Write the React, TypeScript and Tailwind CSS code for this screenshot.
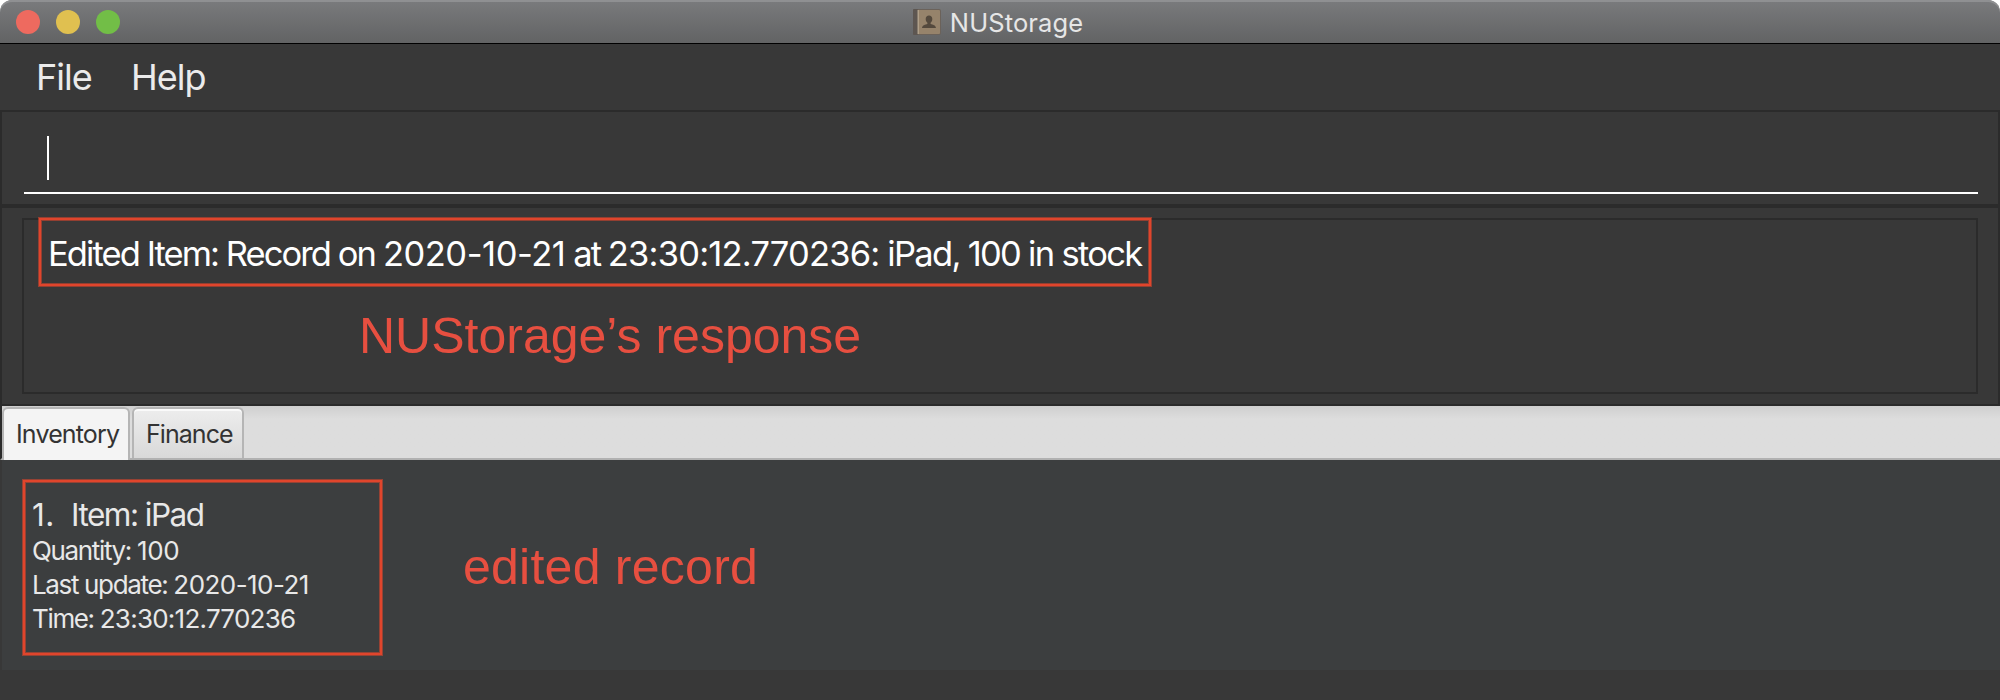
function BookIcon() {
  return (
    <svg width="28" height="26" viewBox="0 0 28 26" className="block shrink-0">
      <rect x="0" y="0" width="28" height="26" rx="2" fill="#6b625a" />
      <rect x="0" y="0" width="5" height="26" rx="1" fill="#5d5651" />
      <rect x="5" y="1" width="22" height="24" rx="1" fill="#96836b" />
      <rect x="4.5" y="1" width="1.5" height="24" fill="#b0a08a" />
      <path
        d="M16 6.5c2 0 3.300 1.400 3.300 3.500 0 1.600-.7 3-1.700 3.800v1.300c2.200.5 5 1.200 5.400 3.900H9c.4-2.700 3.200-3.400 5.400-3.900v-1.300c-1-.8-1.700-2.200-1.700-3.800 0-2.100 1.300-3.500 3.300-3.500z"
        fill="#54493d"
      />
    </svg>
  );
}

function TitleBar() {
  return (
    <header className="relative flex h-11 items-center justify-center rounded-t-[12px] border-b border-black bg-linear-to-b from-[#7a7b7d] to-[#626364] shadow-[inset_0_2px_0_#8f9092]">
      <div className="absolute left-4 top-[10px] flex gap-4">
        <span className="size-6 rounded-full bg-[#ee6a5f]" />
        <span className="size-6 rounded-full bg-[#e0c050]" />
        <span className="size-6 rounded-full bg-[#72be47]" />
      </div>
      <div className="flex items-center gap-[9px] pr-[4px]">
        <BookIcon />
        <span className="whitespace-nowrap pt-[2px] text-[25.5px] leading-[30px] tracking-[0.1px] text-[#e6e6e6]">NUStorage</span>
      </div>
    </header>
  );
}

function MenuBar() {
  return (
    <nav className="flex h-[66px] items-center bg-[#383838] pl-9 text-[36px] leading-[44px] tracking-[-1px] text-[#ebebeb]">
      <span className="w-[95px]">File</span>
      <span>Help</span>
    </nav>
  );
}

function CommandBox() {
  return (
    <section className="h-[96px] border-2 border-[#2b2b2b] bg-[#383838] px-[22px] pt-6">
      <div className="h-[58px] w-[1954px] border-b-2 border-white pl-[23px]">
        <div className="h-11 w-[2px] bg-white" />
      </div>
    </section>
  );
}

function ResultDisplay() {
  return (
    <section className="h-[200px] border-2 border-[#2b2b2b] bg-[#383838] px-5 pt-[10px]">
      <div className="relative h-44 border-2 border-[#2b2b2b] pl-6 pt-[11px]">
        <p className="whitespace-nowrap text-[34.5px] leading-[46px] tracking-[-1.92px] text-white">
          Edited Item: Record on <span className="tracking-[-0.45px]">2020-10-21</span> at{" "}
          <span className="tracking-[-0.8px]">23:30:12.770236:</span>{" "}
          <span className="tracking-[-1.7px]">iPad, 100 in stock</span>
        </p>
        <div className="absolute left-[15px] top-[-2px] h-[68px] w-[1112px] border-2 border-[#e0452c] shadow-[0_0_0_1px_#dc452c90,inset_0_0_0_1px_#dc452c90]" />
        <p className="absolute left-[335px] top-[87px] whitespace-nowrap font-['Liberation_Sans',sans-serif] text-[50px] leading-[58px] text-[#e74f40]">
          NUStorage’s response
        </p>
      </div>
    </section>
  );
}

function Tabs() {
  return (
    <div className="flex h-[54px] items-start gap-[2px] border-b-2 border-l-2 border-b-[#b1b1b1] border-l-[#2b2b2b] bg-linear-to-b from-[#cfcfcf] to-[#dddddd] to-25% pt-[1px] text-[25px] text-[#333333]">
      <div className="flex h-[53px] w-[128px] rounded-t-[6px] border-2 border-b-0 border-[#b5b5b5] bg-[#f4f4f4] pl-3 pt-[10px] leading-[30px] tracking-[-0.85px]">
        Inventory
      </div>
      <div className="flex h-[51px] w-[112px] rounded-t-[6px] border-2 border-b-0 border-[#b5b5b5] bg-linear-to-b from-[#ededed] to-[#d9d9d9] pl-3 pt-[10px] leading-[30px] tracking-[-0.95px] shadow-[inset_0_2px_0_#fafafa]">
        Finance
      </div>
    </div>
  );
}

function InventoryList() {
  return (
    <main className="relative h-[210px] border-l-2 border-[#383838] bg-[#3c3e3f] pl-[30px] pt-9 text-[#e8e8e8]">
      <div className="flex text-[31.5px] leading-[38px] tracking-[-1.5px]">
        <span className="w-[39px] tracking-[0.5px]">1.</span>
        <span className="whitespace-nowrap">Item: iPad</span>
      </div>
      <div className="text-[26px] leading-[34px] tracking-[-1.35px]">
        <p>
          Quantity: <span className="tracking-[-0.3px]">100</span>
        </p>
        <p>
          Last update: <span className="tracking-[-0.55px]">2020-10-21</span>
        </p>
        <p>
          Time: <span className="tracking-[-0.75px]">23:30:12.770236</span>
        </p>
      </div>
      <div className="absolute left-[21px] top-[20px] h-[175px] w-[359px] border-2 border-[#e0452c] shadow-[0_0_0_1px_#dc452c90,inset_0_0_0_1px_#dc452c90]" />
      <p className="absolute left-[461px] top-[78px] whitespace-nowrap font-['Liberation_Sans',sans-serif] text-[50px] leading-[58px] tracking-[0.25px] text-[#e74f40]">
        edited record
      </p>
    </main>
  );
}

export default function App() {
  return (
    <div className="h-[700px] w-[2000px] overflow-hidden bg-white font-['Inter','Liberation_Sans',sans-serif]">
      <TitleBar />
      <MenuBar />
      <div className="h-[590px] bg-[#383838]">
        <CommandBox />
        <ResultDisplay />
        <Tabs />
        <InventoryList />
      </div>
    </div>
  );
}
